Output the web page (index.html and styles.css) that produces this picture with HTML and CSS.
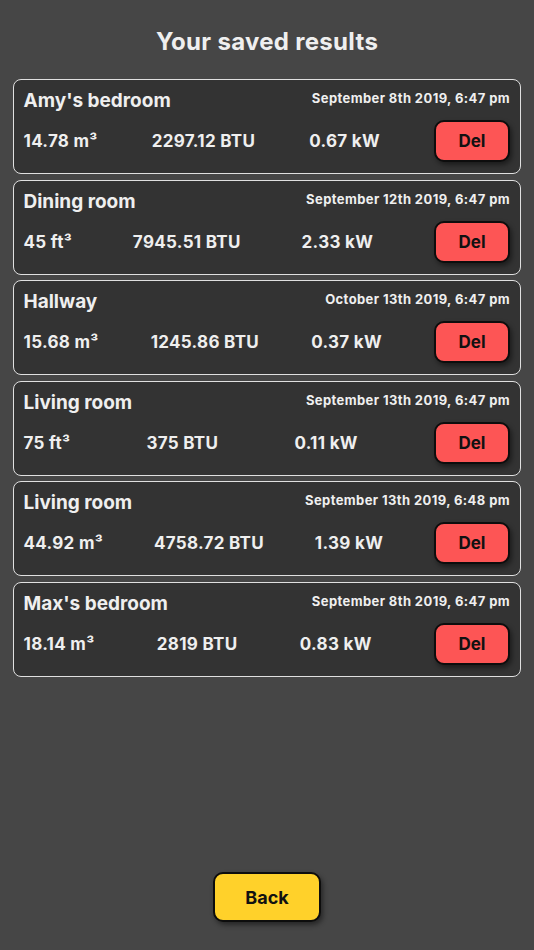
FILE: index.html
```html
<!DOCTYPE html>
<html>
<head>
<meta charset="utf-8">
<link rel="stylesheet" href="styles.css">
</head>
<body>
<div class="page">
  <h1 class="title">Your saved results</h1>
  <div class="list">
    <div class="card">
      <div class="head"><span class="name">Amy's bedroom</span><span class="date">September 8th 2019, 6:47 pm</span></div>
      <div class="row"><span class="val">14.78 m³</span><span class="val">2297.12 BTU</span><span class="val">0.67 kW</span><button class="del">Del</button></div>
    </div>
    <div class="card">
      <div class="head"><span class="name">Dining room</span><span class="date">September 12th 2019, 6:47 pm</span></div>
      <div class="row"><span class="val">45 ft³</span><span class="val">7945.51 BTU</span><span class="val">2.33 kW</span><button class="del">Del</button></div>
    </div>
    <div class="card">
      <div class="head"><span class="name">Hallway</span><span class="date">October 13th 2019, 6:47 pm</span></div>
      <div class="row"><span class="val">15.68 m³</span><span class="val">1245.86 BTU</span><span class="val">0.37 kW</span><button class="del">Del</button></div>
    </div>
    <div class="card">
      <div class="head"><span class="name">Living room</span><span class="date">September 13th 2019, 6:47 pm</span></div>
      <div class="row"><span class="val">75 ft³</span><span class="val">375 BTU</span><span class="val">0.11 kW</span><button class="del">Del</button></div>
    </div>
    <div class="card">
      <div class="head"><span class="name">Living room</span><span class="date">September 13th 2019, 6:48 pm</span></div>
      <div class="row"><span class="val">44.92 m³</span><span class="val">4758.72 BTU</span><span class="val">1.39 kW</span><button class="del">Del</button></div>
    </div>
    <div class="card">
      <div class="head"><span class="name">Max's bedroom</span><span class="date">September 8th 2019, 6:47 pm</span></div>
      <div class="row"><span class="val">18.14 m³</span><span class="val">2819 BTU</span><span class="val">0.83 kW</span><button class="del">Del</button></div>
    </div>
  </div>
  <button class="back">Back</button>
</div>
</body>
</html>
```
FILE: styles.css
```css
html, body {
  margin: 0;
  padding: 0;
  background: #464646;
}
body {
  font-family: Inter, "Liberation Sans", Arial, sans-serif;
  color: #efefef;
}
.page {
  height: 950px;
  display: flex;
  flex-direction: column;
  box-sizing: border-box;
  padding: 0 13px 28px;
}
.title {
  margin: 27px 0 0;
  height: 52px;
  font-size: 24px;
  line-height: 30px;
  font-weight: 700;
  letter-spacing: 0.3px;
  text-align: center;
  color: #efefef;
}
.list {
  display: flex;
  flex-direction: column;
  gap: 5.6px;
}
.card {
  background: #333333;
  border: 1.6px solid #e0e0e0;
  border-radius: 8px;
  padding: 9px 10px 10px 9.5px;
  height: 95px;
  box-sizing: border-box;
}
.head {
  display: flex;
  justify-content: space-between;
  align-items: flex-start;
  height: 24px;
}
.name {
  font-size: 19px;
  line-height: 24px;
  font-weight: 700;
}
.date {
  font-size: 13px;
  line-height: 16px;
  font-weight: 700;
  letter-spacing: 0.4px;
  margin-top: 1px;
}
.row {
  display: flex;
  justify-content: space-between;
  align-items: center;
  margin-top: 7px;
}
.val {
  font-size: 17px;
  font-weight: 700;
  letter-spacing: 0.3px;
}
.del {
  width: 76px;
  height: 42px;
  background: #fd5555;
  border: 2px solid #0d0d0d;
  border-radius: 10px;
  box-shadow: 2px 3px 5px rgba(0,0,0,0.45);
  font-family: inherit;
  font-size: 17px;
  font-weight: 700;
  color: #111;
  padding: 0;
}
.back {
  margin: auto auto 0;
  width: 108px;
  height: 50px;
  background: #ffd12a;
  border: 2px solid #0d0d0d;
  border-radius: 10px;
  box-shadow: 2px 3px 5px rgba(0,0,0,0.45);
  font-family: inherit;
  font-size: 18px;
  font-weight: 700;
  color: #111;
  padding: 0;
}
```
